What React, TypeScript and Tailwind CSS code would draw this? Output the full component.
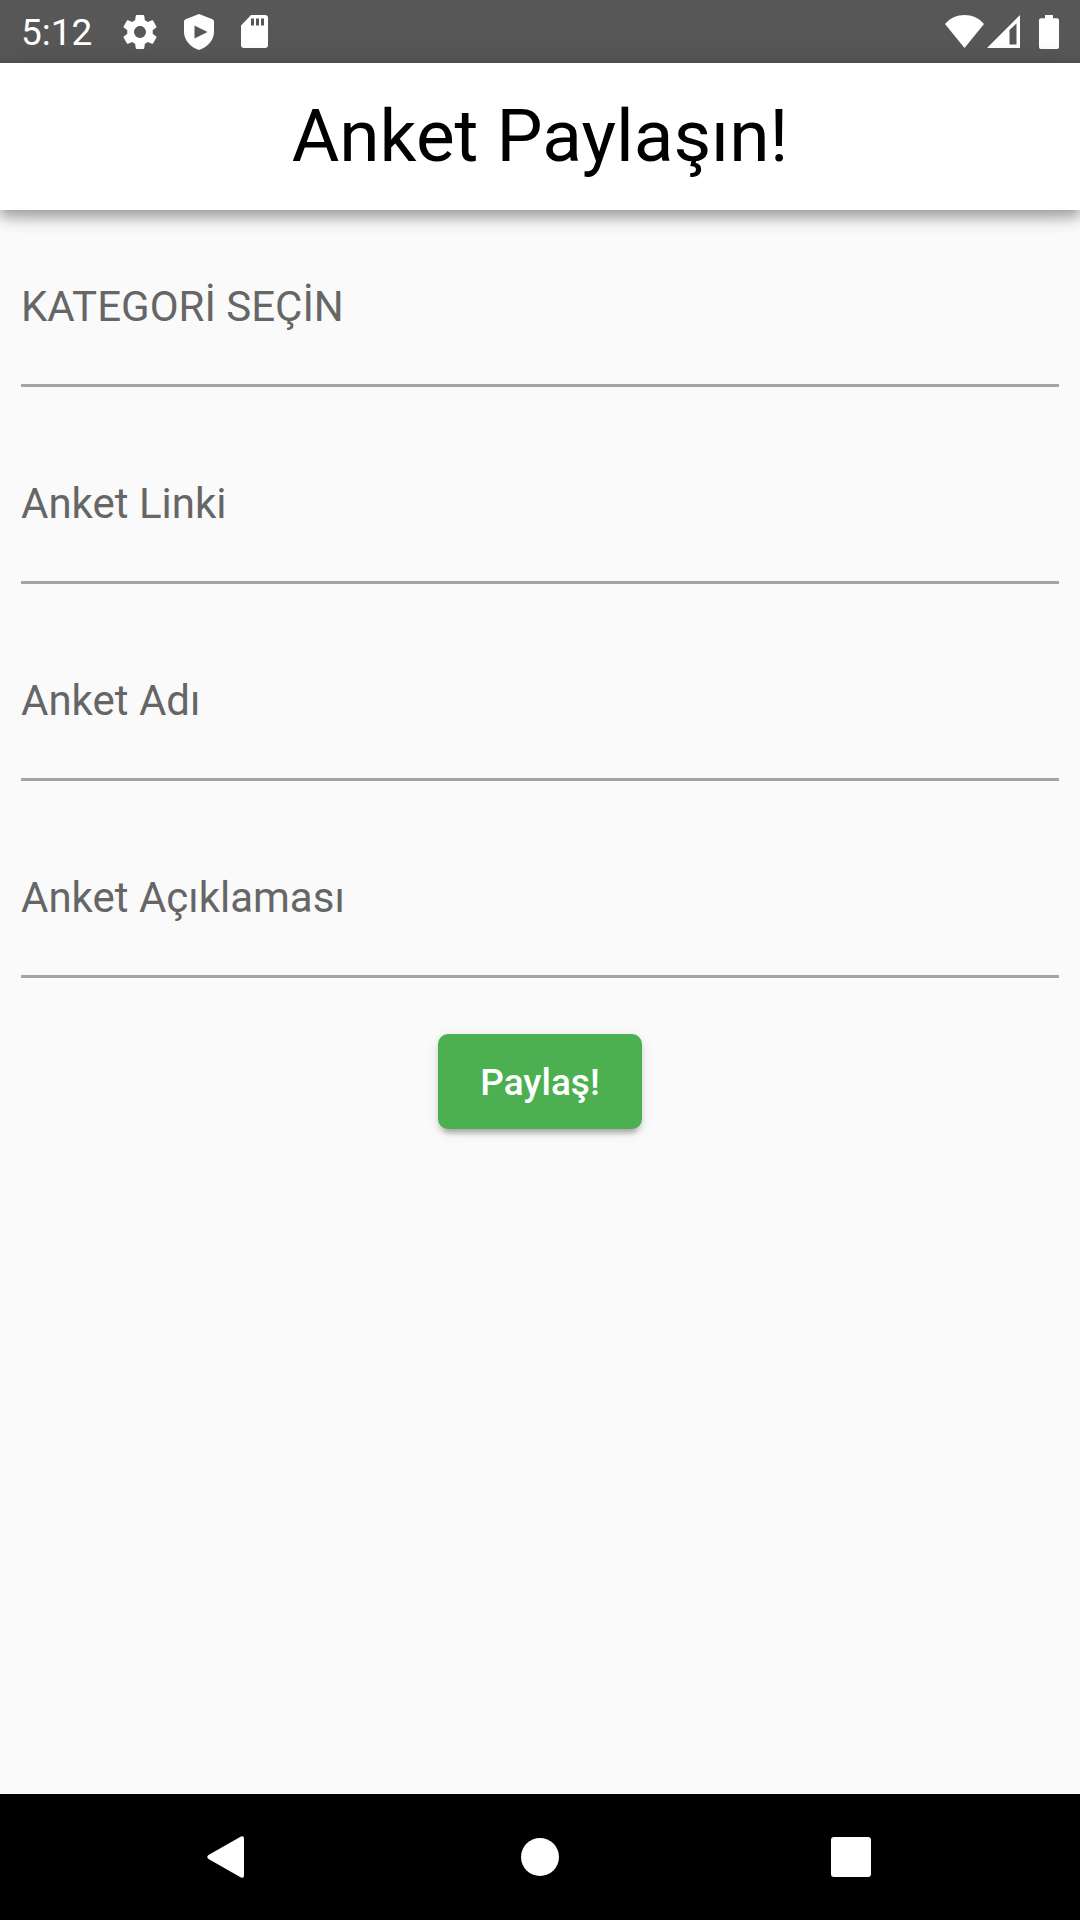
import { useState } from "react";

function GearIcon() {
  return (
    <svg viewBox="2 2 20 20" className="h-[34px] w-[34px] fill-white" aria-hidden="true">
      <path d="M19.43 12.98c.04-.32.07-.64.07-.98s-.03-.66-.07-.98l2.11-1.65c.19-.15.24-.42.12-.64l-2-3.46c-.12-.22-.39-.3-.61-.22l-2.49 1c-.52-.4-1.08-.73-1.69-.98l-.38-2.65C14.46 2.18 14.25 2 14 2h-4c-.25 0-.46.18-.49.42l-.38 2.65c-.61.25-1.17.59-1.69.98l-2.49-1c-.23-.09-.49 0-.61.22l-2 3.46c-.13.22-.07.49.12.64l2.11 1.65c-.04.32-.07.65-.07.98s.03.66.07.98l-2.11 1.65c-.19.15-.24.42-.12.64l2 3.46c.12.22.39.3.61.22l2.49-1c.52.4 1.08.73 1.69.98l.38 2.65c.03.24.24.42.49.42h4c.25 0 .46-.18.49-.42l.38-2.65c.61-.25 1.17-.59 1.69-.98l2.49 1c.23.09.49 0 .61-.22l2-3.46c.12-.22.07-.49-.12-.64l-2.11-1.65zM12 15.5c-1.93 0-3.5-1.57-3.5-3.5s1.57-3.5 3.5-3.5 3.5 1.57 3.5 3.5-1.57 3.5-3.5 3.5z" />
    </svg>
  );
}

function ShieldIcon() {
  return (
    <svg viewBox="0 0 30 36" className="h-9 w-[30px] fill-white" aria-hidden="true">
      <path
        fillRule="evenodd"
        d="M15 0 L28.5 5.2 Q30 5.9 30 7.5 V18 C30 26 23.5 33.5 15 36 C6.5 33.5 0 26 0 18 V7.5 Q0 5.9 1.5 5.2 Z M10.5 11.5 V24.5 L23.5 18 Z"
      />
    </svg>
  );
}

function SdCardIcon() {
  return (
    <svg viewBox="0 0 27 33" className="h-[33px] w-[27px] fill-white" aria-hidden="true">
      <path
        fillRule="evenodd"
        d="M10 0 H24 Q27 0 27 3 V30 Q27 33 24 33 H3 Q0 33 0 30 V10.5 Z M10 3.5 V10.5 H13 V3.5 Z M15 3.5 V10.5 H18 V3.5 Z M20 3.5 V10.5 H23 V3.5 Z"
      />
    </svg>
  );
}

function WifiIcon() {
  return (
    <svg viewBox="0 0 39 33" className="h-[33px] w-[39px] fill-white" aria-hidden="true">
      <path d="M19.5 33 L0 9 C5 3 12 0 19.5 0 S34 3 39 9 Z" />
    </svg>
  );
}

function SignalIcon() {
  return (
    <svg viewBox="0 0 33 33" className="h-[33px] w-[33px] fill-white" aria-hidden="true">
      <path fillRule="evenodd" d="M33 0 V33 H0 Z M29.5 8.5 L22.5 15 V29.5 H29.5 Z" />
    </svg>
  );
}

function BatteryIcon() {
  return (
    <svg viewBox="0 0 20 34" className="h-[34px] w-5 fill-white" aria-hidden="true">
      <path d="M6 0 H14 V3.3 H18 Q20 3.3 20 5.3 V32 Q20 34 18 34 H2 Q0 34 0 32 V5.3 Q0 3.3 2 3.3 H6 Z" />
    </svg>
  );
}

function StatusBar() {
  return (
    <div className="flex h-[63px] items-center justify-between bg-[#575757] px-[21px] text-white">
      <div className="flex items-center">
        <span className="mr-[31px] pt-0.5 text-[37px] leading-[43px]">5:12</span>
        <div className="flex items-center gap-[27px]">
          <GearIcon />
          <ShieldIcon />
          <SdCardIcon />
        </div>
      </div>
      <div className="flex items-center gap-[3px]">
        <WifiIcon />
        <SignalIcon />
        <span className="ml-4">
          <BatteryIcon />
        </span>
      </div>
    </div>
  );
}

function Field({ id, label }: { id: string; label: string }) {
  const [value, setValue] = useState("");
  return (
    <div className="grid h-[156px] border-b-[3px] border-[#a3a3a3] focus-within:border-[#4caf50]">
      <input
        id={id}
        type="text"
        value={value}
        placeholder=" "
        onChange={(e) => setValue(e.target.value)}
        className="peer col-start-1 row-start-1 w-full bg-transparent pt-6 text-[42px] text-[#212121] outline-none"
      />
      <label
        htmlFor={id}
        className="pointer-events-none col-start-1 row-start-1 self-center pb-0.5 text-[42px] leading-[48px] text-[#666666] peer-focus:self-start peer-focus:text-3xl peer-[:not(:placeholder-shown)]:self-start peer-[:not(:placeholder-shown)]:text-3xl"
      >
        {label}
      </label>
    </div>
  );
}

const fields = [
  { id: "kategori", label: "KATEGORİ SEÇİN" },
  { id: "link", label: "Anket Linki" },
  { id: "ad", label: "Anket Adı" },
  { id: "aciklama", label: "Anket Açıklaması" },
];

function NavigationBar() {
  return (
    <nav className="grid h-[126px] grid-cols-[1fr_200px_1fr] items-center bg-black">
      <button type="button" aria-label="Geri" className="ml-[47%] justify-self-start">
        <svg viewBox="0 0 37 42" className="block h-[42px] w-[37px] fill-white">
          <path d="M34 .5 Q37 -.8 37 2.5 V39.5 Q37 42.8 34 41.5 L1.5 23 Q-1 21 1.5 19 Z" />
        </svg>
      </button>
      <button type="button" aria-label="Ana ekran" className="justify-self-center">
        <svg viewBox="0 0 38 38" className="block h-[38px] w-[38px] fill-white">
          <circle cx="19" cy="19" r="19" />
        </svg>
      </button>
      <button type="button" aria-label="Son uygulamalar" className="mr-[47.5%] justify-self-end">
        <svg viewBox="0 0 40 40" className="block h-10 w-10 fill-white">
          <rect width="40" height="40" rx="3" />
        </svg>
      </button>
    </nav>
  );
}

export default function App() {
  return (
    <div className="flex min-h-screen flex-col bg-[#fafafa] font-[Roboto,sans-serif]">
      <StatusBar />
      <header className="flex h-[147px] items-center justify-center bg-white pb-0.5 shadow-[0_5px_11px_rgba(0,0,0,0.2),0_10px_13px_rgba(0,0,0,0.14),0_2px_26px_rgba(0,0,0,0.12)]">
        <h1 className="text-[73px] leading-[86px] text-black">Anket Paylaşın!</h1>
      </header>
      <main className="flex-1 px-[21px] pt-[21px]">
        <form className="flex flex-col" onSubmit={(e) => e.preventDefault()}>
          <div className="flex flex-col gap-[41px]">
            {fields.map((f) => (
              <Field key={f.id} id={f.id} label={f.label} />
            ))}
          </div>
          <button
            type="submit"
            className="mt-14 h-[95px] self-center rounded-[10px] bg-[#4caf50] px-[42px] pt-0.5 text-[37px] font-medium text-white shadow-[0_8px_5px_-5px_rgba(0,0,0,0.2),0_5px_5px_rgba(0,0,0,0.1),0_3px_13px_rgba(0,0,0,0.1)]"
          >
            Paylaş!
          </button>
        </form>
      </main>
      <NavigationBar />
    </div>
  );
}
